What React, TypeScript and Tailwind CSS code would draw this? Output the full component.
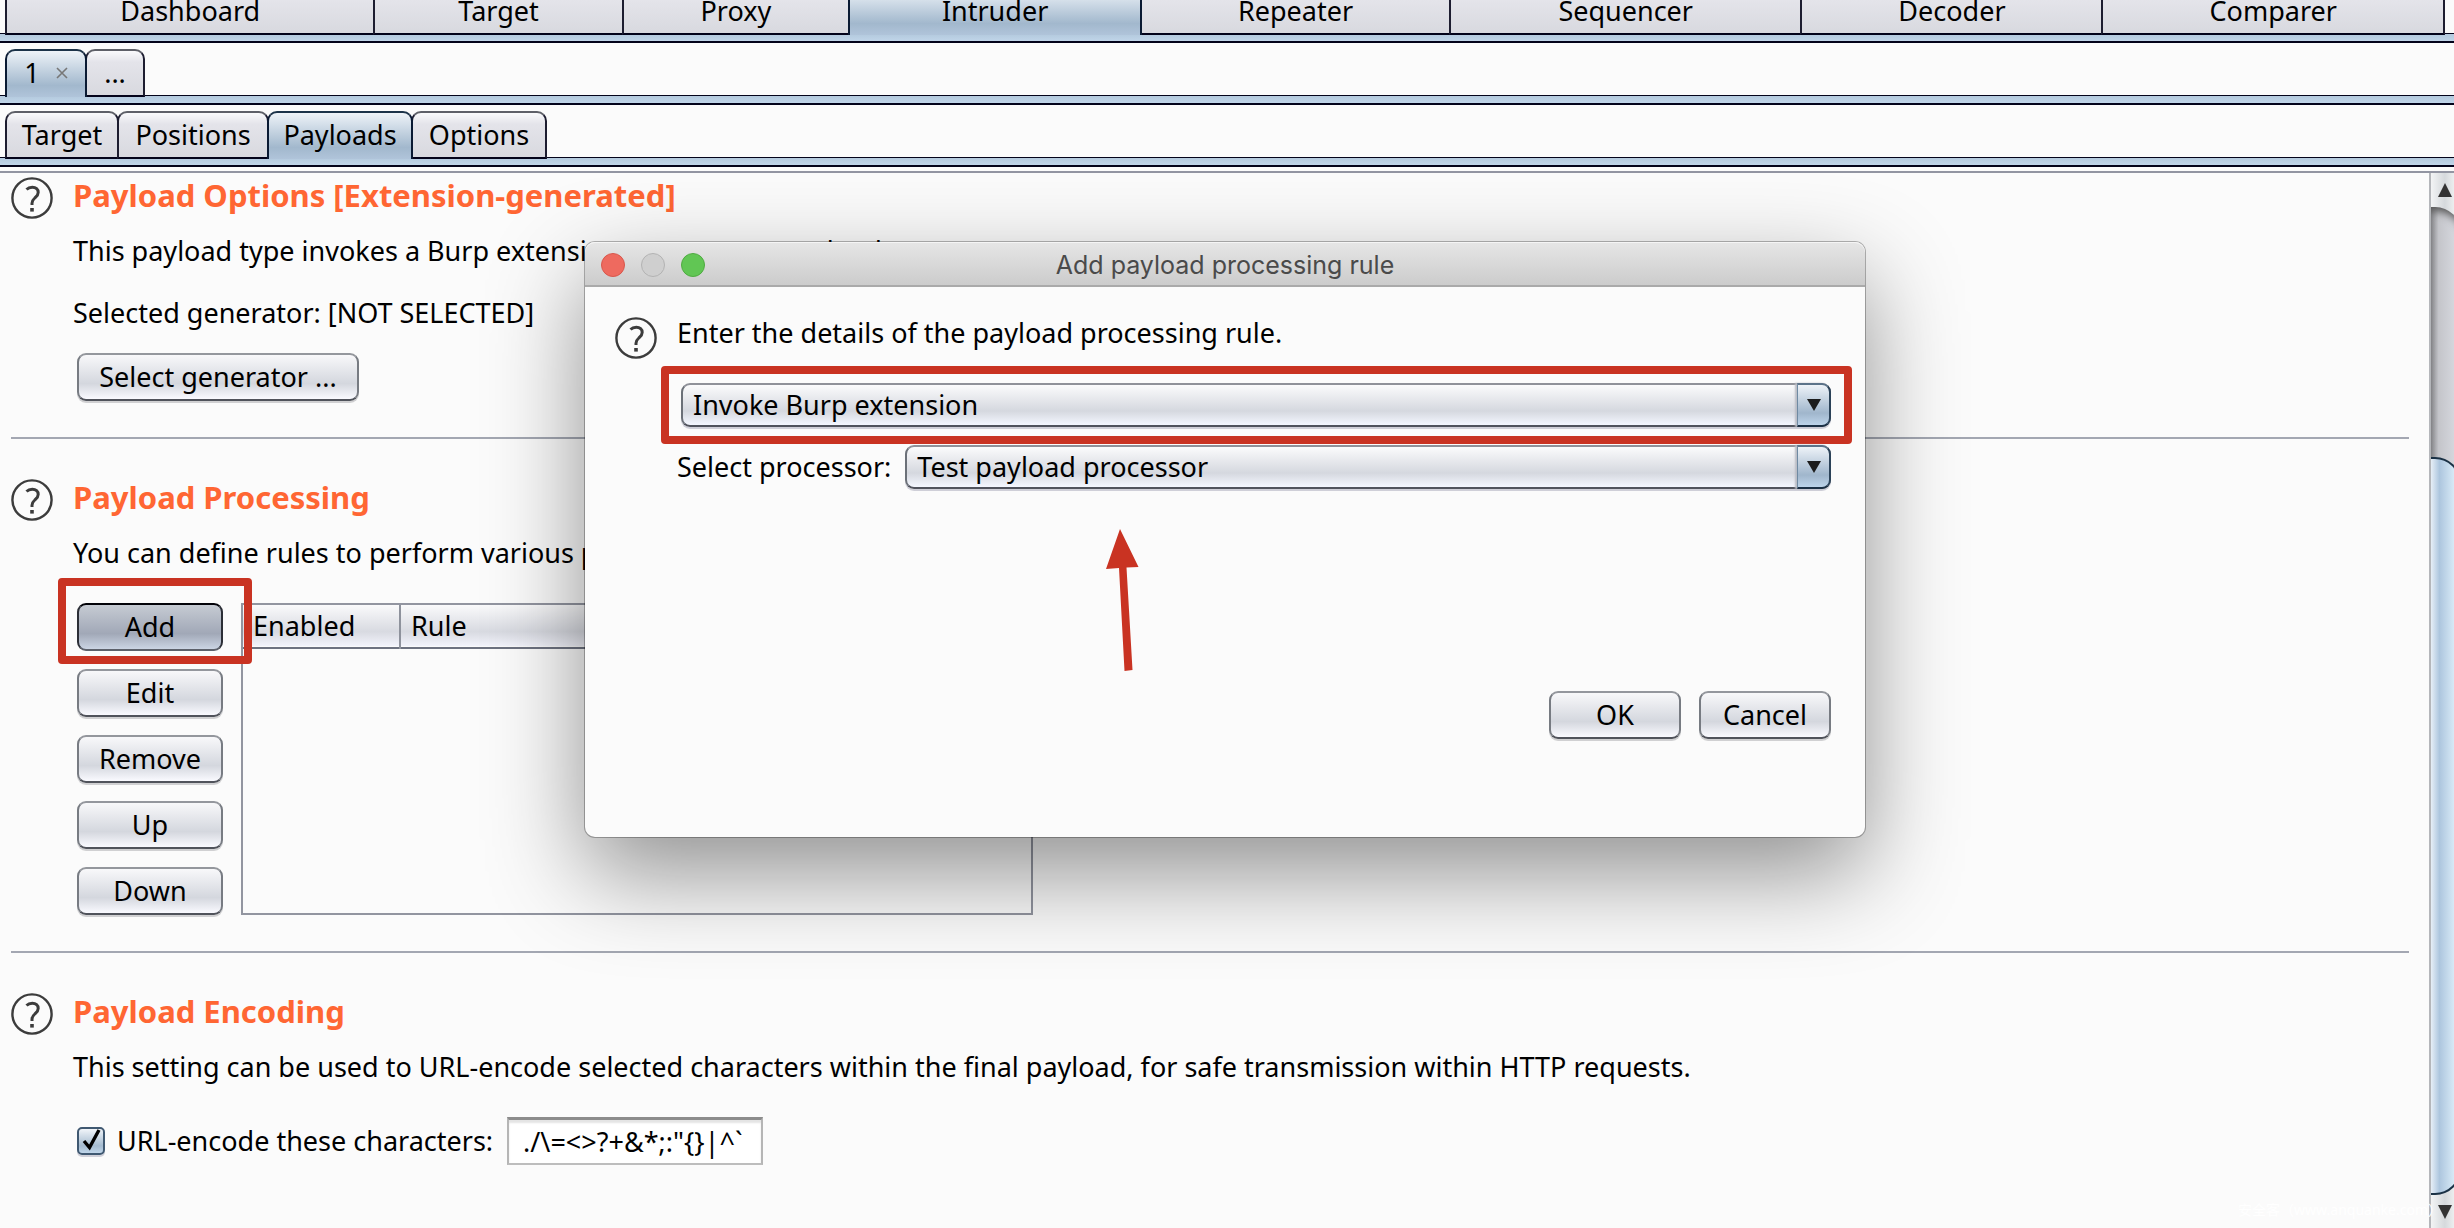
import React from 'react';
import clsx from 'clsx';

const mainTabs = [
  { label: 'Dashboard', size: 'flex-[369_1_0]' },
  { label: 'Target', size: 'flex-[248_1_0]' },
  { label: 'Proxy', size: 'flex-[226_1_0]' },
  { label: 'Intruder', size: 'flex-[292_1_0]', active: true },
  { label: 'Repeater', size: 'flex-[309_1_0]' },
  { label: 'Sequencer', size: 'flex-[352_1_0]' },
  { label: 'Decoder', size: 'flex-[301_1_0]' },
  { label: 'Comparer', size: 'flex-[342_1_0]' },
];

const attackTabs = [
  { label: 'Target', size: 'w-[114px]' },
  { label: 'Positions', size: 'w-[152px]' },
  { label: 'Payloads', size: 'w-[146px]', active: true },
  { label: 'Options', size: 'w-[136px]' },
];

interface TabProps {
  active?: boolean;
  className?: string;
  children: React.ReactNode;
}

const Tab: React.FC<TabProps> = ({ active, className, children }) => (
  <button
    type="button"
    role="tab"
    aria-selected={!!active}
    className={clsx(
      'relative flex h-12 shrink-0 items-center justify-center gap-4 rounded-t-[10px] border-x-2 border-t-2 leading-9 whitespace-nowrap',
      active
        ? 'z-10 border-x-[#0a1a33] border-t-[#1c3349] bg-linear-to-b from-[#eef3f8] via-[#a2b8cd] via-75% to-[#b0c4da] pb-[2px]'
        : 'border-b-2 border-x-[#1d1d30] border-t-[#5e6068] border-b-[#03031a] bg-linear-to-b from-[#fafafc] via-[#e4e4ea] via-25% to-[#d8d9df]',
      className
    )}
  >
    {children}
  </button>
);

// Blue strip below each row of tabs
const TabStrip: React.FC = () => (
  <div className="h-[10px] border-t border-b-2 border-t-[#03031a] border-b-[#03031a] bg-linear-to-b from-[#b3c9dd] to-[#c0d5e9]" />
);

const HelpIcon: React.FC = () => (
  <button type="button" aria-label="Help" className="size-[42px] shrink-0">
    <svg viewBox="0 0 42 42" className="size-[42px]" fill="none" stroke="#3c3c3c">
      <circle cx="21" cy="21" r="19.6" strokeWidth="2.4" />
      <path d="M15.5 12.5C17 11 19 10.3 21.3 10.3C25 10.3 27.2 12.4 27.2 15.4C27.2 18 25.6 19.3 23.8 21C22 22.6 21 24 21 26.2V28" strokeWidth="3" />
      <path d="M21 31V34.6" strokeWidth="3.6" />
    </svg>
  </button>
);

interface PushButtonProps {
  pressed?: boolean;
  className?: string;
  children: React.ReactNode;
}

const PushButton: React.FC<PushButtonProps> = ({ pressed, className, children }) => (
  <button
    type="button"
    className={clsx(
      'flex h-12 items-center justify-center rounded-[9px] border-2 leading-9 whitespace-nowrap',
      pressed
        ? 'border-x-[#2b2e36] border-t-[#020208] border-b-[#5c616b] bg-linear-to-b from-[#c6cbd3] via-[#a1a8b7] via-65% to-[#cbd5e4]'
        : 'border-x-[#777b82] border-t-[#94979d] border-b-[#50535b] bg-linear-to-b from-[#f8f8fa] via-[#d4d7de] via-65% to-[#fafaff] shadow-[0_2px_0_#d0d0d2]',
      className
    )}
  >
    {children}
  </button>
);

interface SectionProps {
  title: string;
  text: string;
  last?: boolean;
  children: React.ReactNode;
}

const Section: React.FC<SectionProps> = ({ title, text, last, children }) => (
  <section className={clsx('flex gap-5', last ? 'pb-9' : 'mb-10 border-b-2 border-[#a3a7b2] pb-9')}>
    <HelpIcon />
    <div className="min-w-0 flex-1">
      <h2 className="mb-5 text-[31px] leading-9 font-bold text-[#ff6633]">{title}</h2>
      <p className="whitespace-nowrap">{text}</p>
      {children}
    </div>
  </section>
);

interface ComboProps {
  id: string;
  label?: string;
  value: string;
}

const Combo: React.FC<ComboProps> = ({ id, label, value }) => (
  <div className="relative h-11 flex-1 rounded-[9px] shadow-[0_2px_0_#cfcfd8]">
    <select
      id={id}
      aria-label={label}
      className="h-11 w-full appearance-none rounded-[9px] border-2 border-x-[#6b7078] border-t-[#8f9199] border-b-[#50535d] bg-linear-to-b from-[#fbfbfc] via-[#d5d8df] via-65% to-[#f4f7ff] pr-10 pl-[10px] leading-9"
    >
      <option>{value}</option>
    </select>
    <span className="pointer-events-none absolute inset-y-0 right-0 flex w-[34px] items-center justify-center rounded-r-[9px] border-y-2 border-r-2 border-l border-t-[#5c7389] border-r-[#2b4258] border-b-[#1c3045] border-l-[#6f8aa3] bg-linear-to-b from-[#eef3f8] via-[#a0b6cc] via-70% to-[#bdd4ea] shadow-[-2px_0_2px_#b9bcc4]">
      <svg viewBox="0 0 14 12" className="h-3 w-[14px]" fill="#1c1c1c">
        <path d="M0 0H14L7 12Z" />
      </svg>
    </span>
  </div>
);

const Dialog: React.FC = () => (
  <div
    role="dialog"
    aria-labelledby="dialog-title"
    className="absolute top-[242px] left-[585px] z-20 w-[1280px] rounded-[10px] bg-[#fbfbfb] shadow-[0_0_0_1px_rgba(0,0,0,0.28),0_36px_96px_rgba(0,0,0,0.43)]"
  >
    <div className="grid h-[45px] grid-cols-3 items-center rounded-t-[10px] border-b-2 border-[#aaaaaa] bg-linear-to-b from-[#e6e6e6] to-[#cccccc] px-4 pt-[2px] shadow-[inset_0_1px_0_#f5f5f5]">
      <div className="flex gap-4">
        <button type="button" aria-label="Close" className="size-6 rounded-full border border-[#d8574c] bg-[#ee6a5f]" />
        <button type="button" aria-label="Minimize" className="size-6 rounded-full border border-[#b3b3b3] bg-[#cfcfcf]" />
        <button type="button" aria-label="Zoom" className="size-6 rounded-full border border-[#4fab41] bg-[#61c654]" />
      </div>
      <h1 id="dialog-title" className="text-center font-[Inter,sans-serif] text-[25px] leading-9 whitespace-nowrap text-[#4a4a4a]">
        Add payload processing rule
      </h1>
    </div>

    <div className="flex gap-5 pt-[30px] pr-[34px] pb-[98px] pl-[30px]">
      <HelpIcon />
      <div className="flex-1">
        <p className="mb-8 -mt-[2px]">Enter the details of the payload processing rule.</p>
        <div className="relative flex pl-1">
          <Combo id="rule-type" label="Rule type" value="Invoke Burp extension" />
          <div className="pointer-events-none absolute -inset-y-[17px] -right-[21px] -left-4 rounded-[4px] border-8 border-[#c93322]" />
        </div>
        <div className="mt-[18px] flex items-center gap-[14px]">
          <label htmlFor="processor" className="whitespace-nowrap">Select processor:</label>
          <Combo id="processor" value="Test payload processor" />
        </div>
        <div className="mt-[202px] flex justify-end gap-[18px]">
          <PushButton className="w-[132px]">OK</PushButton>
          <PushButton className="w-[132px]">Cancel</PushButton>
        </div>
      </div>
    </div>

    <svg viewBox="0 0 34 144" className="pointer-events-none absolute top-[287px] left-[520px] h-36 w-[34px]" fill="#c93322">
      <path d="M15 0L33.5 38L21.5 38.5L27.5 141L19.5 142L14 39L1 40Z" />
    </svg>
  </div>
);

const Scrollbar: React.FC = () => (
  <div className="flex w-[25px] shrink-0 flex-col overflow-hidden border-l-2 border-[#b4b6ba] bg-linear-to-r from-[#f3f4f5] via-[#d5d9dc] via-60% to-[#eceeef]">
    <button type="button" aria-label="Scroll up" className="flex h-[34px] w-[27px] shrink-0 items-center justify-center">
      <svg viewBox="0 0 14 14" className="size-[14px]" fill="#333333">
        <path d="M7 0L14 14H0Z" />
      </svg>
    </button>
    <div className="-ml-[2px] flex w-8 flex-1 flex-col rounded-r-[26px] bg-linear-to-r from-[#77777a] via-[#c4c5ca] via-30% to-[#dcdee5] shadow-[inset_0_8px_8px_-4px_#555555]">
      <div className="mt-[250px] w-8 flex-1 rounded-r-[26px] border-y-2 border-r-2 border-[#1a3145] bg-linear-to-r from-[#f4f8fc] via-[#adc6de] via-35% to-[#e6f6ff]" />
    </div>
    <button type="button" aria-label="Scroll down" className="flex h-[33px] w-[27px] shrink-0 items-center justify-center">
      <svg viewBox="0 0 14 14" className="size-[14px]" fill="#333333">
        <path d="M0 0H14L7 14Z" />
      </svg>
    </button>
  </div>
);

export default function App() {
  return (
    <div className="relative flex min-h-screen flex-col overflow-hidden bg-[#fbfbfb] font-['Noto_Sans','Noto_Sans_CJK_SC',sans-serif] text-[27px] leading-9 text-black">
      <div role="tablist" className="flex h-[33px] items-end pr-[11px] pl-[5px]">
        {mainTabs.map((tab) => (
          <Tab key={tab.label} active={tab.active} className={clsx('-mr-[2px] -mb-[2px]', tab.size)}>
            {tab.label}
          </Tab>
        ))}
      </div>
      <TabStrip />

      <div role="tablist" className="flex h-[52px] items-end pl-[5px]">
        <Tab active className="-mb-[2px] w-[82px]">
          1
          <svg viewBox="0 0 12 12" className="size-3" stroke="#777777" strokeWidth="1.6">
            <path d="M1 1L11 11M11 1L1 11" />
          </svg>
        </Tab>
        <Tab className="-mb-[2px] -ml-[2px] w-[60px]">...</Tab>
      </div>
      <TabStrip />

      <div role="tablist" className="flex h-[52px] items-end pl-[5px]">
        {attackTabs.map((tab) => (
          <Tab key={tab.label} active={tab.active} className={clsx('-mr-[2px] -mb-[2px]', tab.size)}>
            {tab.label}
          </Tab>
        ))}
      </div>
      <TabStrip />

      <div className="mt-1 flex flex-1 border-t-2 border-[#9295a2]">
        <main className="min-w-0 flex-1 pt-1 pr-5 pl-[11px]">
          <Section
            title="Payload Options [Extension-generated]"
            text="This payload type invokes a Burp extension to generate payloads."
          >
            <p className="mt-[26px] mb-[22px]">Selected generator: [NOT SELECTED]</p>
            <PushButton className="ml-1 w-[282px]">Select generator ...</PushButton>
          </Section>

          <Section
            title="Payload Processing"
            text="You can define rules to perform various processing tasks on each payload before it is used."
          >
            <div className="mt-8 ml-1 flex gap-[18px]">
              <div className="relative flex w-[146px] flex-col gap-[18px]">
                <PushButton pressed>Add</PushButton>
                <PushButton>Edit</PushButton>
                <PushButton>Remove</PushButton>
                <PushButton>Up</PushButton>
                <PushButton>Down</PushButton>
                <div className="pointer-events-none absolute -top-[25px] -left-[19px] z-10 h-[86px] w-[194px] rounded-[4px] border-8 border-[#c93322]" />
              </div>
              <div className="w-[792px] border-2 border-[#9295a0]">
                <table className="w-full table-fixed border-collapse text-left">
                  <thead>
                    <tr className="h-[43px] border-b-2 border-[#6d7280] bg-linear-to-b from-[#fafafb] via-[#d8dae1] via-65% to-[#f2f3fb]">
                      <th scope="col" className="w-[157px] border-r-2 border-[#8e929c] pl-[10px] font-normal">Enabled</th>
                      <th scope="col" className="pl-[10px] font-normal">Rule</th>
                    </tr>
                  </thead>
                  <tbody />
                </table>
              </div>
            </div>
          </Section>

          <Section
            last
            title="Payload Encoding"
            text="This setting can be used to URL-encode selected characters within the final payload, for safe transmission within HTTP requests."
          >
            <div className="mt-8 ml-1 flex h-12 items-center">
              <span className="relative flex">
                <input
                  id="url-encode"
                  type="checkbox"
                  defaultChecked
                  className="size-7 appearance-none rounded-[5px] border-2 border-[#3f5871] bg-linear-to-b from-[#f1f5f9] via-[#a5bbd0] via-70% to-[#c0d6ea] shadow-[0_2px_0_#cfcfd8]"
                />
                <svg viewBox="0 0 28 28" className="pointer-events-none absolute inset-0 size-7" fill="none" stroke="#000000" strokeWidth="3.4">
                  <path d="M7 14L12.5 20.5L22 3" />
                </svg>
              </span>
              <label htmlFor="url-encode" className="mr-[14px] ml-3 whitespace-nowrap">URL-encode these characters:</label>
              <input
                type="text"
                aria-label="Characters to encode"
                defaultValue={'./\\=<>?+&*;:"{}|^`'}
                className="h-12 w-64 border-2 border-t-[3px] border-x-[#b5b5b5] border-t-[#8c8c8c] border-b-[#bdbdbd] bg-white px-[14px] shadow-[inset_0_3px_2px_#e4e4e4]"
              />
            </div>
          </Section>
        </main>
        <Scrollbar />
      </div>

      <p className="pointer-events-none absolute right-3 bottom-2 text-[14px] leading-5 text-white">安全客（www.anquanke.com）</p>
      <Dialog />
    </div>
  );
}
